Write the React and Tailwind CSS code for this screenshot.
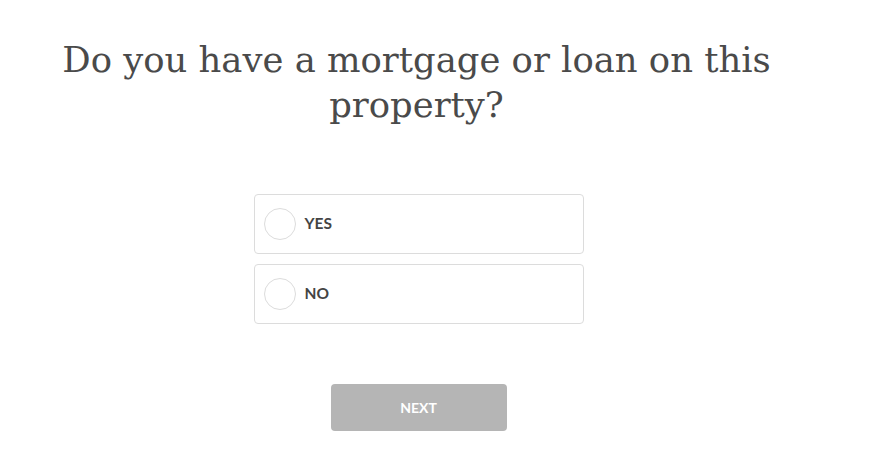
import React, { useState } from "react";

const options = ["YES", "NO"];

const App = () => {
  const [selected, setSelected] = useState(null);

  return (
    <main className="min-h-screen bg-white">
      <div className="w-[837px] flex flex-col items-center pt-[37px]">
        <h1 className="w-[780px] pr-[4px] text-center text-[35.4px] leading-[45px] text-[#4a4a4a] font-['DejaVu_Serif',serif] font-normal">
          Do you have a mortgage or loan on this property?
        </h1>

        <div className="w-[330px] mt-[67px] flex flex-col gap-[10px]">
          {options.map((opt) => (
            <button
              key={opt}
              onClick={() => setSelected(opt)}
              className="h-[60px] w-full flex items-center border border-[#dcdcdc] rounded-[4px] bg-white pl-[9px] text-left"
            >
              <span
                className={`w-[32px] h-[32px] rounded-full border border-[#dcdcdc] ${
                  selected === opt ? "bg-[#4a4a4a]" : "bg-white"
                }`}
              />
              <span className="ml-[9px] text-[15.5px] font-bold text-[#444] font-['Lato',sans-serif]">
                {opt}
              </span>
            </button>
          ))}
        </div>

        <button className="mt-[60px] w-[176px] h-[47px] rounded-[4px] bg-[#b5b5b5] text-white text-[14px] font-bold font-['Lato',sans-serif]">
          NEXT
        </button>
      </div>
    </main>
  );
};

export default App;
